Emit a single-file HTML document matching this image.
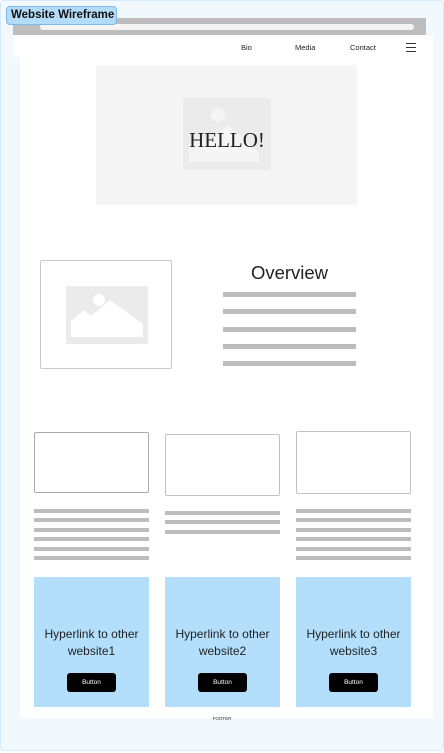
<!DOCTYPE html>
<html><head><meta charset="utf-8"><style>
*{margin:0;padding:0;box-sizing:border-box}
body{width:444px;height:753px;background:#fff;position:relative;overflow:hidden;font-family:"Liberation Sans",sans-serif}
.a{position:absolute}
.ln{position:absolute;height:4px;background:#bdbdbd}
.card{position:absolute;top:577px;width:115px;height:130px;background:#b3dffc;text-align:center;color:#222;font-size:12px;line-height:17px}
.card p{position:absolute;top:49px;left:0;right:0}
.btn{position:absolute;left:33px;top:96px;width:49px;height:19px;background:#000;border-radius:3px;color:#fff;font-size:6.5px;line-height:19px}
.bx{position:absolute;width:115px;border:1px solid #c2c2c2;border-radius:2px;background:#fff}
</style></head><body>
<div class="a" style="left:0;top:0;width:444px;height:751px;background:#f2f9fe;border:1px solid #d6ebfb;border-radius:4px"></div>
<div class="a" style="left:13px;top:18px;width:413px;height:17px;background:#bdbdbd"></div>
<div class="a" style="left:40px;top:24px;width:374px;height:6px;background:#f4f4f4;border-radius:3px"></div>
<div class="a" style="left:13px;top:35px;width:420px;height:22px;background:#fff"></div>
<div class="a" style="left:20px;top:57px;width:413px;height:661px;background:#fff"></div>
<div class="a" style="left:241px;top:43px;font-size:7.5px;color:#222">Bio</div>
<div class="a" style="left:295px;top:43px;font-size:7.5px;color:#222">Media</div>
<div class="a" style="left:350px;top:43px;font-size:7.5px;color:#222">Contact</div>
<div class="a" style="left:406px;top:43px;width:10px;height:1px;background:#333;box-shadow:0 4px 0 #333,0 8px 0 #333"></div>
<div class="a" style="left:6px;top:6px;width:111px;height:19px;background:#b3dcfb;border:1px solid #7fb8e6;border-radius:4px;font-size:11.5px;font-weight:bold;color:#111;line-height:17px;padding-left:4px">Website Wireframe</div>
<div class="a" style="left:96px;top:65px;width:261px;height:140px;background:#f5f5f5;border-radius:2px"></div>
<svg class="a" style="left:183px;top:98px" width="88" height="72" viewBox="0 0 88 72"><rect width="88" height="72" fill="#ebebeb"/><circle cx="35" cy="17" r="7" fill="#f5f5f5"/><path d="M6 64V46L15 38L23 45L45 27L76 55V64Z" fill="#f5f5f5"/></svg>
<div class="a" style="left:183px;top:128px;width:88px;text-align:center;font-family:'Liberation Serif',serif;font-size:21px;color:#222">HELLO!</div>
<div class="a" style="left:40px;top:260px;width:132px;height:109px;border:1px solid #c8c8c8;border-radius:2px"></div>
<svg class="a" style="left:66px;top:286px" width="82" height="58" viewBox="0 0 82 58"><rect width="82" height="58" fill="#ebebeb"/><circle cx="33" cy="14" r="6" fill="#fff"/><path d="M5 51V35L18 24L25 30L44 14L77 38V51Z" fill="#fff"/></svg>
<div class="a" style="left:213px;top:262px;width:153px;text-align:center;font-size:18.5px;color:#222">Overview</div>
<div class="ln" style="left:223px;top:292px;width:133px;height:5px"></div>
<div class="ln" style="left:223px;top:309px;width:133px;height:5px"></div>
<div class="ln" style="left:223px;top:327px;width:133px;height:5px"></div>
<div class="ln" style="left:223px;top:344px;width:133px;height:5px"></div>
<div class="ln" style="left:223px;top:361px;width:133px;height:5px"></div>
<div class="bx" style="left:34px;top:432px;height:61px;border-color:#aaa"></div>
<div class="bx" style="left:165px;top:434px;height:62px"></div>
<div class="bx" style="left:296px;top:431px;height:63px"></div>
<div class="ln" style="left:34px;top:509px;width:115px"></div>
<div class="ln" style="left:34px;top:518px;width:115px"></div>
<div class="ln" style="left:34px;top:528px;width:115px"></div>
<div class="ln" style="left:34px;top:537px;width:115px"></div>
<div class="ln" style="left:34px;top:547px;width:115px"></div>
<div class="ln" style="left:34px;top:556px;width:115px"></div>
<div class="ln" style="left:165px;top:511px;width:115px"></div>
<div class="ln" style="left:165px;top:520px;width:115px"></div>
<div class="ln" style="left:165px;top:530px;width:115px"></div>
<div class="ln" style="left:296px;top:509px;width:115px"></div>
<div class="ln" style="left:296px;top:518px;width:115px"></div>
<div class="ln" style="left:296px;top:528px;width:115px"></div>
<div class="ln" style="left:296px;top:537px;width:115px"></div>
<div class="ln" style="left:296px;top:547px;width:115px"></div>
<div class="ln" style="left:296px;top:556px;width:115px"></div>
<div class="card" style="left:34px"><p>Hyperlink to other<br>website1</p><div class="btn">Button</div></div>
<div class="card" style="left:165px"><p>Hyperlink to other<br>website2</p><div class="btn">Button</div></div>
<div class="card" style="left:296px"><p>Hyperlink to other<br>website3</p><div class="btn">Button</div></div>
<div class="a" style="left:0;width:444px;top:716px;text-align:center;font-size:4.5px;color:#333">FOOTER</div>
</body></html>
